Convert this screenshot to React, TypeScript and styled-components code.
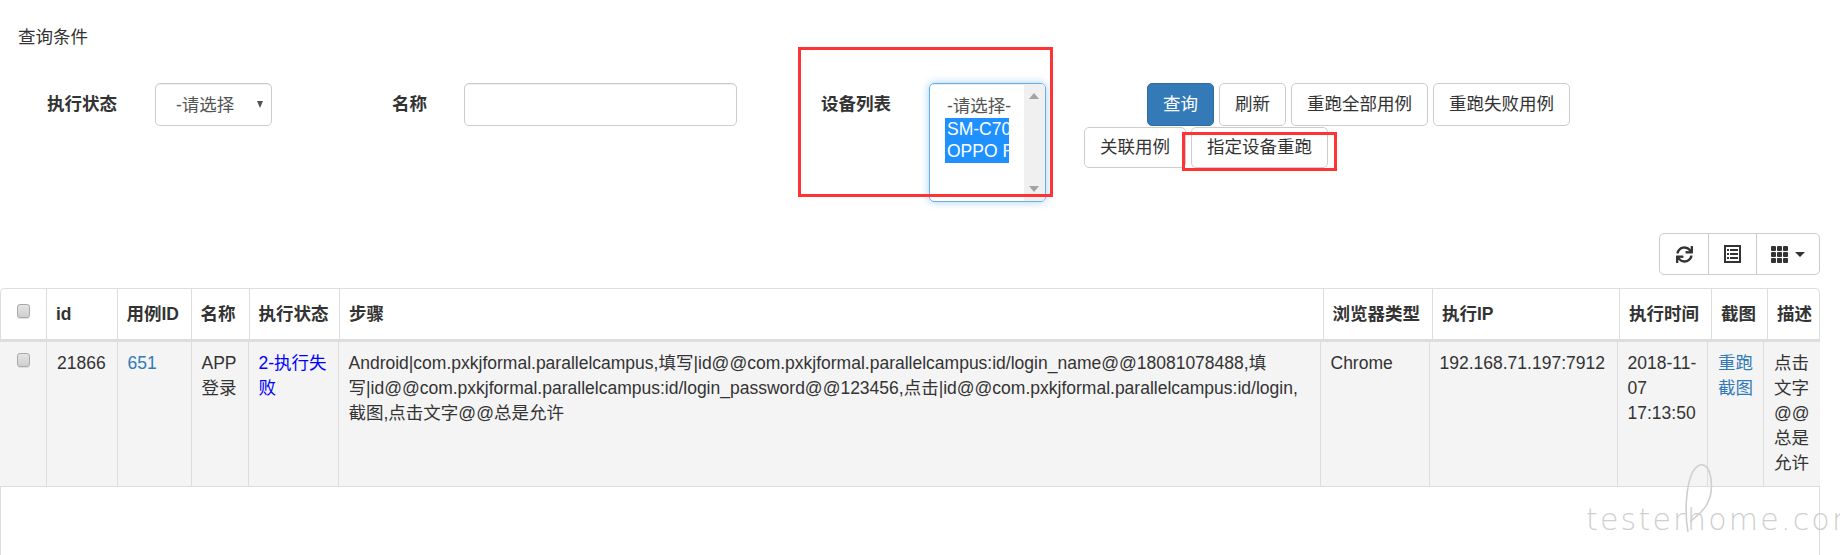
import React from 'react';
import styled, { createGlobalStyle } from 'styled-components';
import { FaSync } from 'react-icons/fa';

const FONT = '"Liberation Sans", "Noto Sans CJK SC", sans-serif';

const GlobalStyle = createGlobalStyle`
  html, body {
    margin: 0;
    padding: 0;
    background: #fff;
    overflow: hidden;
  }
  body {
    font-family: ${FONT};
    font-size: 17.5px;
    line-height: 25px;
    color: #333;
  }
`;

const HEAD_COLUMNS = '46px 70.5px 74px 58px 90.5px 983.5px 109.5px 187px 92px 56px 1fr';
const BODY_COLUMNS = '46px 70.5px 74px 57px 90px 982px 109px 188px 90.5px 56px 1fr';

const Page = styled.div`
  position: relative;
  width: 1840px;
  height: 555px;
  overflow: hidden;
`;

const Title = styled.div`
  padding: 25px 0 0 18px;
  height: 83px;
  box-sizing: border-box;
`;

const QueryBar = styled.div`
  display: flex;
  align-items: flex-start;
  height: 150px;
`;

const Label = styled.label<{ $left: number; $width: number }>`
  margin-left: ${p => p.$left}px;
  width: ${p => p.$width}px;
  font-weight: 700;
  line-height: 43px;
  white-space: nowrap;
`;

const SelectWrap = styled.div`
  position: relative;
  width: 117px;
  height: 43px;
  margin-left: 37px;
  box-sizing: border-box;
  border: 1px solid #ccc;
  border-radius: 5px;
  padding: 9px 0 0 20px;
  color: #555;
  box-shadow: inset 0 1px 1px rgba(0, 0, 0, 0.075);

  &::after {
    content: '';
    position: absolute;
    right: 8px;
    top: 17px;
    border-left: 3.5px solid transparent;
    border-right: 3.5px solid transparent;
    border-top: 7px solid #555;
  }
`;

const TextInput = styled.input`
  width: 273px;
  height: 43px;
  margin-left: 36px;
  box-sizing: border-box;
  border: 1px solid #ccc;
  border-radius: 5px;
  outline: none;
  box-shadow: inset 0 1px 1px rgba(0, 0, 0, 0.075);
`;

const ListBox = styled.div`
  position: relative;
  width: 117px;
  height: 119px;
  margin-left: 36px;
  box-sizing: border-box;
  border: 1px solid #66afe9;
  border-radius: 5px;
  padding: 11px 0 0 15px;
  color: #555;
  overflow: hidden;
  box-shadow: inset 0 1px 1px rgba(0, 0, 0, 0.075), 0 0 8px rgba(102, 175, 233, 0.6);
`;

const ListOption = styled.div<{ $selected?: boolean }>`
  width: 62px;
  height: 22.5px;
  padding-left: 2px;
  line-height: 22px;
  white-space: nowrap;
  overflow: ${p => (p.$selected ? 'hidden' : 'visible')};
  color: ${p => (p.$selected ? '#fff' : '#555')};
  background: ${p => (p.$selected ? '#1e90ff' : 'transparent')};
`;

const ScrollBar = styled.div`
  position: absolute;
  top: 0;
  right: 0;
  bottom: 0;
  width: 21px;
  background: #f0f0f0;

  &::before,
  &::after {
    content: '';
    position: absolute;
    left: 5px;
    border-left: 5px solid transparent;
    border-right: 5px solid transparent;
  }
  &::before {
    top: 9px;
    border-bottom: 6px solid #a3a3a3;
  }
  &::after {
    bottom: 9px;
    border-top: 6px solid #a3a3a3;
  }
`;

const Actions = styled.div`
  display: flex;
  flex-direction: column;
  gap: 1px;
  margin-left: 38px;
`;

const ActionRow = styled.div<{ $indent?: number }>`
  display: flex;
  gap: 5px;
  margin-left: ${p => p.$indent ?? 0}px;
`;

const Button = styled.button<{ $primary?: boolean; $compact?: boolean }>`
  height: ${p => (p.$compact ? 41 : 43)}px;
  padding: 0 15px;
  font: inherit;
  white-space: nowrap;
  color: ${p => (p.$primary ? '#fff' : '#333')};
  background: ${p => (p.$primary ? '#337ab7' : '#fff')};
  border: 1px solid ${p => (p.$primary ? '#2e6da4' : '#ccc')};
  border-radius: 5px;
`;

const ToolbarRow = styled.div`
  display: flex;
  justify-content: flex-end;
  padding-right: 20px;
  height: 55px;
`;

const Toolbar = styled.div`
  display: flex;
  height: 42px;
  box-sizing: border-box;
  border: 1px solid #ccc;
  border-radius: 5px;
`;

const ToolButton = styled.div<{ $width: number }>`
  display: flex;
  align-items: center;
  justify-content: center;
  gap: 7px;
  width: ${p => p.$width}px;
  box-sizing: border-box;
  color: #333;

  & + & {
    border-left: 1px solid #ccc;
  }
`;

const Caret = styled.span`
  border-left: 5px solid transparent;
  border-right: 5px solid transparent;
  border-top: 5px solid #333;
`;

const TableBox = styled.div`
  width: 1820px;
  height: 267px;
  box-sizing: border-box;
  border: 1px solid #ddd;
  border-bottom: none;
  border-radius: 5px 5px 0 0;
`;

const HeadRow = styled.div`
  display: grid;
  grid-template-columns: ${HEAD_COLUMNS};
  margin-left: -1px;
  margin-right: -1px;
  height: 53px;
  box-sizing: border-box;
  border-bottom: 3px solid #ddd;
`;

const HeadCell = styled.div`
  padding: 13px 0 0 9px;
  font-weight: 700;
  white-space: nowrap;
  box-sizing: border-box;
  border-left: 1px solid #ddd;
`;

const BodyRow = styled.div`
  display: grid;
  grid-template-columns: ${BODY_COLUMNS};
  margin-left: -1px;
  margin-right: -1px;
  height: 145px;
  box-sizing: border-box;
  background: #f4f4f4;
  border-bottom: 1px solid #ddd;
`;

const BodyCell = styled.div`
  padding: 9px 10px 0;
  box-sizing: border-box;
  overflow-wrap: anywhere;
  border-left: 1px solid #ddd;
`;

const CheckCell = styled.div`
  display: flex;
  justify-content: center;
  padding-top: 15px;
  box-sizing: border-box;
`;

const BodyCheckCell = styled(CheckCell)`
  padding-top: 11px;
`;

const CheckBox = styled.span`
  display: block;
  width: 13px;
  height: 14px;
  margin-left: 1px;
  box-sizing: border-box;
  border: 1px solid #a9a9a9;
  border-radius: 3px;
  background: linear-gradient(#e4e4e4, #cfcfcf);
  box-shadow: 0 1px 0 #e0e0e0;
`;

const TableLink = styled.a<{ $color?: string }>`
  color: ${p => p.$color ?? '#337ab7'};
  text-decoration: none;
`;

const RedFrame = styled.div<{ $x: number; $y: number; $w: number; $h: number }>`
  position: absolute;
  left: ${p => p.$x}px;
  top: ${p => p.$y}px;
  width: ${p => p.$w}px;
  height: ${p => p.$h}px;
  box-sizing: border-box;
  border: 3px solid #ff3333;
  pointer-events: none;
`;

const Watermark = styled.div`
  position: absolute;
  left: 1586px;
  top: 503px;
  font-family: "DejaVu Sans", sans-serif;
  font-weight: 200;
  font-size: 30px;
  line-height: 34px;
  letter-spacing: 2.2px;
  white-space: nowrap;
  color: #cfcfcf;
`;

const WatermarkLoop = styled.svg`
  position: absolute;
  left: 1680px;
  top: 460px;
`;

function ListAltIcon() {
  return (
    <svg width="17" height="18" viewBox="0 0 17 18">
      <rect x="1" y="1" width="15" height="16" fill="#fff" stroke="#333" strokeWidth="2" />
      <rect x="3" y="4" width="2" height="2" fill="#333" />
      <rect x="6" y="4" width="8" height="2" fill="#333" />
      <rect x="3" y="8" width="2" height="2" fill="#333" />
      <rect x="6" y="8" width="8" height="2" fill="#333" />
      <rect x="3" y="12" width="2" height="2" fill="#333" />
      <rect x="6" y="12" width="8" height="2" fill="#333" />
    </svg>
  );
}

function GridIcon() {
  const cells = [0, 6, 12];
  return (
    <svg width="17" height="17" viewBox="0 0 17 17">
      {cells.map(y =>
        cells.map(x => <rect key={`${x}-${y}`} x={x} y={y} width="5" height="5" rx="1" fill="#333" />),
      )}
    </svg>
  );
}

export default function App() {
  return (
    <Page>
      <GlobalStyle />
      <Title>查询条件</Title>
      <QueryBar>
        <Label $left={47} $width={71}>执行状态</Label>
        <SelectWrap>-请选择</SelectWrap>
        <Label $left={120} $width={36}>名称</Label>
        <TextInput />
        <Label $left={84} $width={72}>设备列表</Label>
        <ListBox>
          <ListOption>-请选择-</ListOption>
          <ListOption $selected>SM-C7000</ListOption>
          <ListOption $selected>OPPO R11</ListOption>
          <ScrollBar />
        </ListBox>
        <Actions>
          <ActionRow $indent={63}>
            <Button $primary>查询</Button>
            <Button>刷新</Button>
            <Button>重跑全部用例</Button>
            <Button>重跑失败用例</Button>
          </ActionRow>
          <ActionRow>
            <Button $compact>关联用例</Button>
            <Button $compact>指定设备重跑</Button>
          </ActionRow>
        </Actions>
      </QueryBar>
      <ToolbarRow>
        <Toolbar>
          <ToolButton $width={48}><FaSync size={17} /></ToolButton>
          <ToolButton $width={48}><ListAltIcon /></ToolButton>
          <ToolButton $width={63}><GridIcon /><Caret /></ToolButton>
        </Toolbar>
      </ToolbarRow>
      <TableBox>
        <HeadRow>
          <CheckCell><CheckBox /></CheckCell>
          <HeadCell>id</HeadCell>
          <HeadCell>用例ID</HeadCell>
          <HeadCell>名称</HeadCell>
          <HeadCell>执行状态</HeadCell>
          <HeadCell>步骤</HeadCell>
          <HeadCell>浏览器类型</HeadCell>
          <HeadCell>执行IP</HeadCell>
          <HeadCell>执行时间</HeadCell>
          <HeadCell>截图</HeadCell>
          <HeadCell>描述</HeadCell>
        </HeadRow>
        <BodyRow>
          <BodyCheckCell><CheckBox /></BodyCheckCell>
          <BodyCell>21866</BodyCell>
          <BodyCell><TableLink>651</TableLink></BodyCell>
          <BodyCell>APP登录</BodyCell>
          <BodyCell><TableLink $color="#0000ff">2-执行失败</TableLink></BodyCell>
          <BodyCell>
            Android|com.pxkjformal.parallelcampus,填写|id@@com.pxkjformal.parallelcampus:id/login_name@@18081078488,填写|id@@com.pxkjformal.parallelcampus:id/login_password@@123456,点击|id@@com.pxkjformal.parallelcampus:id/login,截图,点击文字@@总是允许
          </BodyCell>
          <BodyCell>Chrome</BodyCell>
          <BodyCell>192.168.71.197:7912</BodyCell>
          <BodyCell>2018-11-07 17:13:50</BodyCell>
          <BodyCell><TableLink>重跑截图</TableLink></BodyCell>
          <BodyCell>点击文字@@总是允许</BodyCell>
        </BodyRow>
      </TableBox>
      <RedFrame $x={798} $y={47} $w={255} $h={150} />
      <RedFrame $x={1182} $y={132} $w={155} $h={39} />
      <Watermark>testerhome.com</Watermark>
      <WatermarkLoop width="40" height="75" viewBox="0 0 40 75">
        <path
          d="M8 72 C4 50 6 10 20 5 C32 2 34 30 28 42 C24 52 16 56 10 62"
          fill="none"
          stroke="#cfcfcf"
          strokeWidth="1.6"
        />
      </WatermarkLoop>
    </Page>
  );
}
